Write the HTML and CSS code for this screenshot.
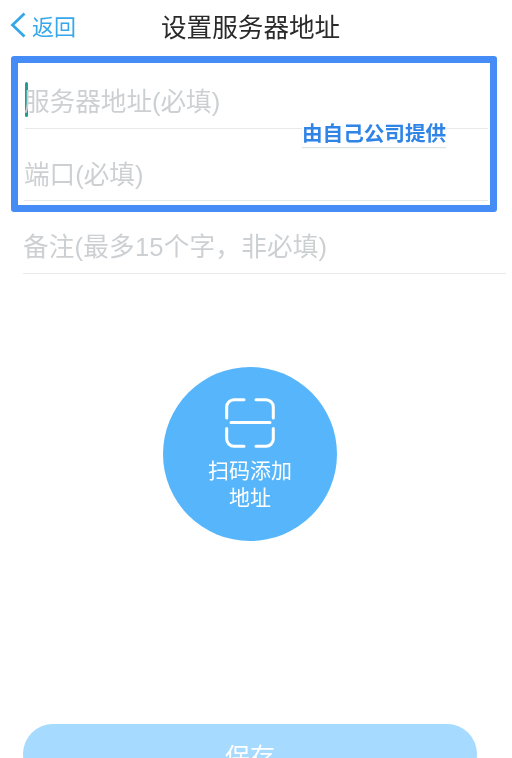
FILE: index.html
```html
<!DOCTYPE html>
<html lang="zh-CN">
<head>
<meta charset="utf-8">
<title>设置服务器地址</title>
<link rel="stylesheet" href="styles.css">
</head>
<body>
<main class="screen">
  <header class="nav">
    <a class="back">
      <svg class="back-icon" width="17" height="26" viewBox="0 0 17 26"><path d="M15.5 1.5 3.5 13l12 11.5" fill="none" stroke="#35a7ea" stroke-width="2.8"/></svg>
      <span>返回</span>
    </a>
    <h1 class="title">设置服务器地址</h1>
  </header>
  <section class="highlight">
    <div class="row row-first"><span class="caret"></span><span class="ph">服务器地址(必填)</span></div>
    <div class="row row-second"><span class="ph">端口(必填)</span></div>
    <strong class="note">由自己公司提供</strong>
  </section>
  <div class="row row-third"><span class="ph">备注(最多15个字，非必填)</span></div>
  <div class="scan-wrap">
    <button class="scan">
      <svg width="50" height="50" viewBox="0 0 50 50" fill="none" stroke="#fff" stroke-width="3" stroke-linecap="round"><path d="M19 1.700H9A7.300 7.300 0 0 0 1.700 9v11M31 1.700H41A7.300 7.300 0 0 1 48.300 9v11M6 24.500H45M1.700 30.500v10.500A7.300 7.300 0 0 0 9 48.300H19M48.300 30.500v10.500A7.300 7.300 0 0 1 41 48.300H31"/></svg>
      <span class="scan-text">扫码添加<br>地址</span>
    </button>
  </div>
  <button class="save">保存</button>
</main>
</body>
</html>
```
FILE: styles.css
```css
* { box-sizing: border-box; }
html, body { margin: 0; padding: 0; height: 100%; overflow: hidden; background: #fff; }
body { font-family: "Liberation Sans", "Noto Sans CJK SC", sans-serif; }
.screen { width: 512px; height: 758px; overflow: hidden; display: flex; flex-direction: column; filter: blur(0.4px); }
.nav { height: 56px; display: flex; align-items: center; flex: none; padding: 0 0 6px 9px; }
.back { display: flex; align-items: center; gap: 6px; color: #35a7ea; font-size: 22px; width: 152px; }
.back-icon { flex: none; }
.title { margin: 0; font-size: 25.6px; font-weight: 400; color: #2a2a2a; }
.highlight { position: relative; width: 486px; height: 156px; margin-left: 11px; border: 7px solid #468cf6; border-radius: 3px; flex: none; }
.row { display: flex; align-items: center; color: #cdd0d3; font-size: 25.6px; border-bottom: 1px solid #e8eaea; }
.row-first { height: 66px; margin: 0 2px 0 7px; padding-top: 8px; position: relative; }
.row-second { height: 72px; margin: 0 2px 0 6px; padding-top: 15px; }
.row-third { height: 62px; flex: none; margin: 0 6px 0 23px; padding-top: 4px; letter-spacing: 0.2px; }
.ph { white-space: nowrap; }
.caret { width: 3px; height: 35px; background: #1f9f94; border-radius: 2px; margin-right: -4px; flex: none; }
.note { position: absolute; left: 284px; top: 58px; color: #2f84e6; font-size: 20.6px; font-weight: 700; background: #fff; line-height: 26px; box-shadow: 0 1px 1px #d8e4e4; }
.scan-wrap { flex: 1; display: flex; justify-content: flex-start; padding: 93px 0 0 163px; min-height: 0; }
.scan { width: 174px; height: 174px; border: 0; border-radius: 50%; background: #57b6fb; color: #fff; padding: 31px 0 0; font: inherit; display: flex; flex-direction: column; align-items: center; gap: 9px; }
.scan-text { font-size: 21px; line-height: 27px; text-align: center; }
.save { flex: none; width: 454px; height: 60px; margin: 0 0 -26px 23px; border: 0; border-radius: 30px; background: #a6daff; color: #fff; font-family: inherit; font-size: 25px; padding: 6px 0 0; text-align: center; line-height: 30px; display: block; }
```
